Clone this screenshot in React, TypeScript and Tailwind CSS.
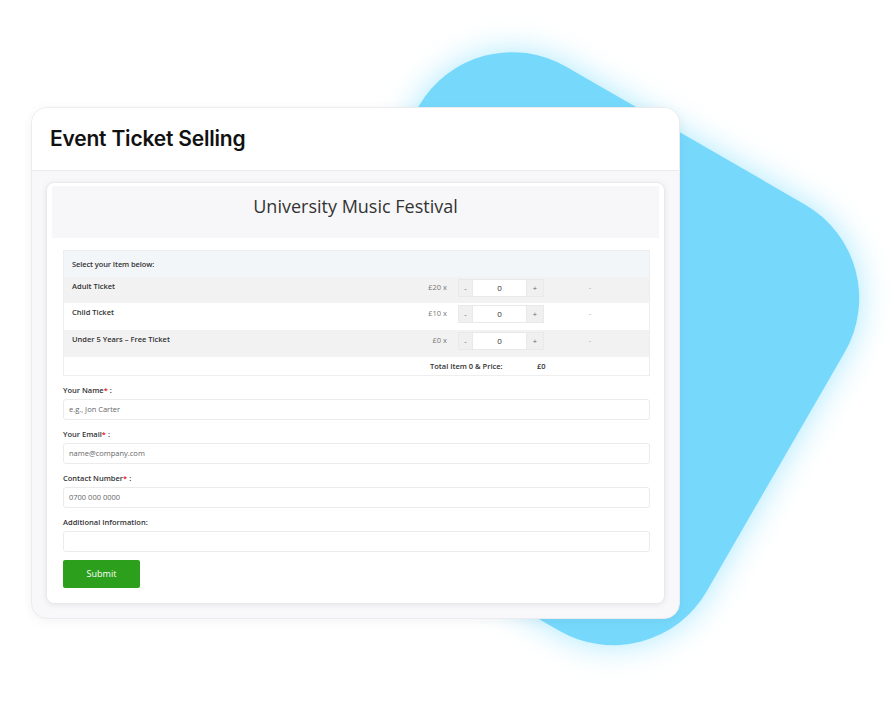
import React from 'react'

const items = [
  { name: 'Adult Ticket', price: '£20 x', shade: true },
  { name: 'Child Ticket', price: '£10 x', shade: false },
  { name: 'Under 5 Years – Free Ticket', price: '£0 x', shade: true },
]

const fields = [
  { label: 'Your Name', required: true, placeholder: 'e.g., Jon Carter' },
  { label: 'Your Email', required: true, placeholder: 'name@company.com' },
  { label: 'Contact Number', required: true, placeholder: '0700 000 0000' },
  { label: 'Additional Information:', required: false, placeholder: '' },
]

const sans = "font-['Open_Sans','Noto_Sans',sans-serif]"

function Blob() {
  return (
    <svg className="absolute inset-0 pointer-events-none" width="896" height="705" viewBox="0 0 896 705">
      <defs>
        <filter id="glow" x="-20%" y="-20%" width="140%" height="140%">
          <feGaussianBlur stdDeviation="16" />
        </filter>
      </defs>
      <rect
        x={316.7}
        y={102.7}
        width={492}
        height={492}
        rx={108}
        fill="#9be4fd"
        opacity={0.85}
        filter="url(#glow)"
        transform="rotate(30 562.7 348.7)"
      />
      <rect
        x={316.7}
        y={102.7}
        width={492}
        height={492}
        rx={108}
        fill="#76d9fc"
        transform="rotate(30 562.7 348.7)"
      />
    </svg>
  )
}

function Stepper() {
  return (
    <div className="flex h-[18px] mt-[2px] ml-[11px] text-[7.5px]">
      <div className="w-[15px] bg-[#f0f0f0] border border-[#e9e9e9] flex items-center justify-center text-[#666]">-</div>
      <div className="w-[53px] bg-white border-y border-[#e9e9e9] flex items-center justify-center text-[#333] text-[8px]">0</div>
      <div className="w-[18px] bg-[#f0f0f0] border border-[#e9e9e9] flex items-center justify-center text-[#666]">+</div>
    </div>
  )
}

export default function App() {
  return (
    <div className="relative w-[896px] h-[705px] bg-white overflow-hidden">
      <Blob />
      <div className="relative pt-[107px] pl-[31px]">
        <div className="w-[649px] rounded-[16px] bg-[#f8f8fa] border border-[#ececf0] shadow-[0_2px_12px_rgba(0,0,0,0.05)] overflow-hidden">
          <div className="h-[63px] bg-white border-b border-[#ececef] flex items-center pl-[18px]">
            <h1 className="text-[21px] font-semibold text-[#111] font-['Inter','Roboto',sans-serif] tracking-[-0.2px]">
              Event Ticket Selling
            </h1>
          </div>
          <div className="px-[14px] pt-[11px] pb-[14px]">
            <div className={`bg-white rounded-[8px] border border-[#e8e8ed] shadow-[0_1px_6px_rgba(0,0,0,0.08)] px-[5px] pt-[3px] pb-[15px] ${sans}`}>
              <div className="h-[52px] bg-[#f7f7f9] flex justify-center pt-[8px]">
                <h2 className="text-[18px] leading-[24px] text-[#333]">University Music Festival</h2>
              </div>
              <div className="pl-[11px] pr-[9px] pt-[12px]">
                <div className="border border-[#eeeeee] text-[7.5px] leading-[10px] text-[#333]">
                  <div className="h-[26px] bg-[#f3f6f9] flex items-center pl-[8px] font-semibold tracking-[-0.1px]">
                    Select your Item below:
                  </div>
                  {items.map((it, i) => (
                    <div
                      key={it.name}
                      className={`flex items-start ${i === 0 ? 'h-[26px]' : 'h-[27px]'} ${it.shade ? 'bg-[#f2f2f2]' : 'bg-white'}`}
                    >
                      <div className="w-[330px] pl-[8px] pt-[4px] font-semibold">{it.name}</div>
                      <div className="w-[53px] text-right pt-[5px] text-[#777]">{it.price}</div>
                      <Stepper />
                      <div className="w-[92px] text-center pt-[5px] text-[#aaa]">-</div>
                    </div>
                  ))}
                  <div className="h-[18px] flex items-center font-semibold">
                    <div className="w-[366px]" />
                    <div className="w-[107px]">Total Item 0 &amp; Price:</div>
                    <div>£0</div>
                  </div>
                </div>
                {fields.map((f) => (
                  <div key={f.label}>
                    <div className="mt-[9px] mb-[4px] text-[7.5px] leading-[10px] font-semibold text-[#333]">
                      {f.required ? (
                        <>
                          {f.label}
                          <span className="text-[#e02020]">*</span> :
                        </>
                      ) : (
                        f.label
                      )}
                    </div>
                    <div className="h-[21px] border border-[#ebebeb] rounded-[3px] bg-white flex items-center pl-[5px] text-[7.5px] text-[#666]">
                      {f.placeholder}
                    </div>
                  </div>
                ))}
                <button className="mt-[8px] w-[77px] h-[28px] bg-[#2ca01c] rounded-[2px] text-white text-[9px]">
                  Submit
                </button>
              </div>
            </div>
          </div>
        </div>
      </div>
    </div>
  )
}
